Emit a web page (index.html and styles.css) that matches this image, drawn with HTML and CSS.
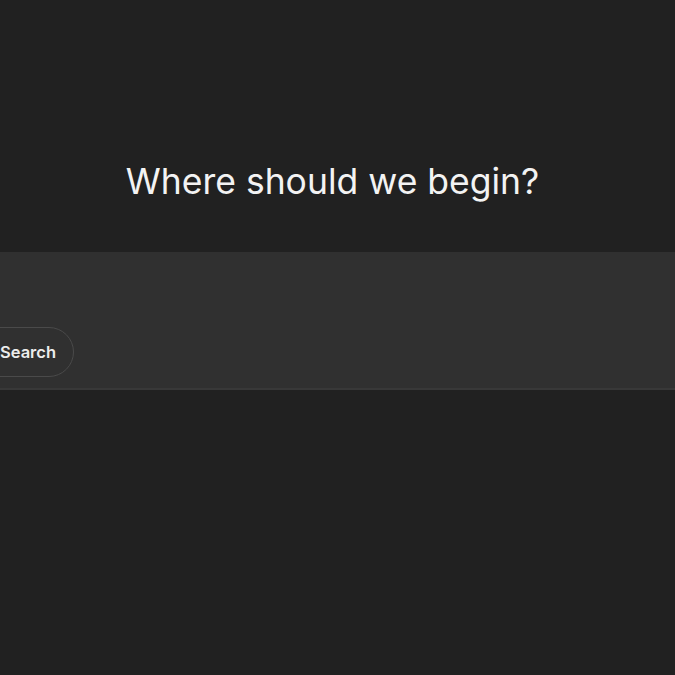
FILE: index.html
```html
<!DOCTYPE html>
<html lang="en">
<head>
    <meta charset="UTF-8">
    <meta name="viewport" content="width=device-width, initial-scale=1.0">
    <title>ChatGPT</title>
    <link rel="stylesheet" href="styles.css">
</head>
<body>
    <main class="thread">
        <h1 class="greeting">Where should we begin?</h1>

        <div class="composer">
            <div class="composer-input"></div>
            <div class="composer-tools">
                <button class="tool-button">
                    <svg class="tool-icon" viewBox="0 0 20 20" width="20" height="20" aria-hidden="true">
                        <circle cx="10" cy="10" r="7.5" fill="none" stroke="currentColor" stroke-width="1.6"/>
                        <path d="M2.5 10h15M10 2.5c2.2 2.3 3 4.8 3 7.5s-.8 5.2-3 7.5c-2.2-2.3-3-4.8-3-7.5s.8-5.2 3-7.5z" fill="none" stroke="currentColor" stroke-width="1.6"/>
                    </svg>
                    <span>Search</span>
                </button>
            </div>
        </div>
    </main>
</body>
</html>
```

FILE: styles.css
```css
html, body {
    margin: 0;
    padding: 0;
    height: 100%;
    background-color: #212121;
    overflow: hidden;
}

body {
    font-family: Inter, "Liberation Sans", sans-serif;
    color: #ececec;
}

.thread {
    display: flex;
    flex-direction: column;
    padding-top: 160px;
}

.greeting {
    margin: 0 10px 0 0;
    font-family: Inter, "Liberation Sans", sans-serif;
    font-size: 35.5px;
    font-weight: 400;
    line-height: 44px;
    text-align: center;
    color: #f3f3f3;
}

.composer {
    margin: 48px 0 0 -45px;
    background-color: #303030;
    border-bottom: 2px solid #383838;
    height: 136px;
    display: flex;
    flex-direction: column;
}

.composer-input {
    flex: 1;
}

.composer-tools {
    display: flex;
    padding: 0 0 11px 0;
}

.tool-button {
    display: flex;
    align-items: center;
    gap: 6px;
    height: 50px;
    padding: 0 17px 0 18px;
    border: 1px solid #4a4a4a;
    border-radius: 999px;
    background-color: #303030;
    color: #ececec;
    font-family: Inter, "Liberation Sans", sans-serif;
    font-size: 16.5px;
    font-weight: 600;
    cursor: pointer;
}

.tool-icon {
    flex-shrink: 0;
}
```
